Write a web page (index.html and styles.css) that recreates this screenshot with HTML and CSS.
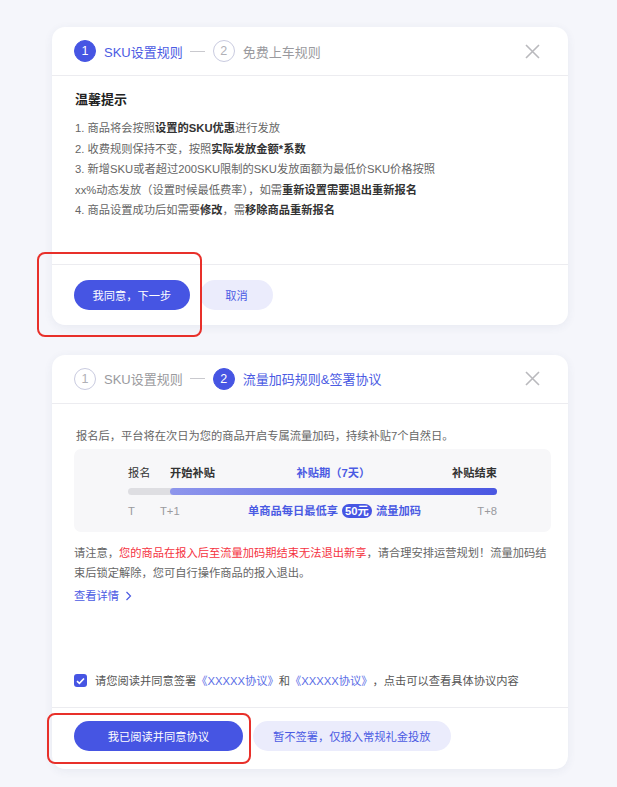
FILE: index.html
```html
<!DOCTYPE html>
<html lang="zh-CN">
<head>
  <meta charset="UTF-8">
  <title>流量加码报名</title>
  <link rel="stylesheet" href="styles.css">
</head>
<body>

  <!-- Step 1: SKU rules -->
  <div class="card">
    <div class="card-head">
      <div class="step active"><span class="num">1</span>SKU设置规则</div>
      <span class="dash"></span>
      <div class="step"><span class="num">2</span>免费上车规则</div>
      <svg class="close" width="15" height="15" viewBox="0 0 15 15"><path d="M1 1L14 14M14 1L1 14" stroke="#b9b9bd" stroke-width="1.6" fill="none"/></svg>
    </div>

    <div class="card-body tips">
      <h4>温馨提示</h4>
      <ol class="tip-list">
        <li>1. 商品将会按照<b>设置的SKU优惠</b>进行发放</li>
        <li>2. 收费规则保持不变，按照<b>实际发放金额*系数</b></li>
        <li>3. 新增SKU或者超过200SKU限制的SKU发放面额为最低价SKU价格按照xx%动态发放（设置时候最低费率），如需<b>重新设置需要退出重新报名</b></li>
        <li>4. 商品设置成功后如需要<b>修改</b>，需<b>移除商品重新报名</b></li>
      </ol>
    </div>

    <div class="card-foot first">
      <button class="btn primary small">我同意，下一步</button>
      <button class="btn light cancel">取消</button>
      <div class="mark mark-1"></div>
    </div>
  </div>

  <!-- Step 2: traffic boost + agreement -->
  <div class="card">
    <div class="card-head">
      <div class="step"><span class="num">1</span>SKU设置规则</div>
      <span class="dash"></span>
      <div class="step active"><span class="num">2</span>流量加码规则&amp;签署协议</div>
      <svg class="close" width="15" height="15" viewBox="0 0 15 15"><path d="M1 1L14 14M14 1L1 14" stroke="#b9b9bd" stroke-width="1.6" fill="none"/></svg>
    </div>

    <div class="card-body boost">
      <p class="intro">报名后，平台将在次日为您的商品开启专属流量加码，持续补贴7个自然日。</p>

      <div class="timeline">
        <div class="tl-top">
          <span class="tl-start">报名</span>
          <div class="tl-labels">
            <b>开始补贴</b>
            <span class="period">补贴期（7天）</span>
            <b>补贴结束</b>
          </div>
        </div>
        <div class="tl-bar"><div class="tl-fill"></div></div>
        <div class="tl-bottom">
          <span>T</span>
          <span>T+1</span>
          <span class="promo">单商品每日最低享 <em>50元</em> 流量加码</span>
          <span>T+8</span>
        </div>
      </div>

      <p class="note">请注意，<span class="warn">您的商品在报入后至流量加码期结束无法退出新享</span>，请合理安排运营规划！流量加码结束后锁定解除，您可自行操作商品的报入退出。</p>

      <a class="more" href="#">查看详情
        <svg width="7" height="10" viewBox="0 0 7 10"><path d="M1.5 1L5.5 5L1.5 9" stroke="#4b5be3" stroke-width="1.2" fill="none"/></svg>
      </a>

      <label class="agree">
        <span class="check">
          <svg width="9" height="8" viewBox="0 0 9 8"><path d="M1 4.2L3.4 6.4L8 1.5" stroke="#fff" stroke-width="1.6" fill="none"/></svg>
        </span>
        请您阅读并同意签署<a href="#">《XXXXX协议》</a>和<a href="#">《XXXXX协议》</a>，点击可以查看具体协议内容
      </label>
    </div>

    <div class="card-foot second">
      <button class="btn primary wide">我已阅读并同意协议</button>
      <button class="btn light">暂不签署，仅报入常规礼金投放</button>
      <div class="mark mark-2"></div>
    </div>
  </div>

</body>
</html>
```

FILE: styles.css
```css
body {
  margin: 0;
  padding: 27px 0 16px 3px;
  background: #f5f6fb;
  font-family: "Liberation Sans", "Noto Sans CJK SC", sans-serif;
  font-size: 11.25px;
  color: #666;
}

.card {
  width: 516px;
  margin: 0 auto 30px;
  background: #fff;
  border-radius: 13px;
  box-shadow: 0 2px 10px rgba(60, 70, 120, 0.07);
}

/* header with steps */
.card-head {
  height: 48px;
  display: flex;
  align-items: center;
  padding: 0 28px 0 22px;
  border-bottom: 1px solid #ececf0;
  font-size: 13px;
  color: #9a9a9e;
}

.step {
  display: flex;
  align-items: center;
  gap: 8px;
}

.step .num {
  width: 22px;
  height: 22px;
  box-sizing: border-box;
  border: 1px solid #c9cbe0;
  border-radius: 50%;
  display: flex;
  align-items: center;
  justify-content: center;
  font-size: 12.5px;
  color: #b0b0b6;
}

.step.active {
  color: #4b5be3;
}

.step.active .num {
  background: #4655e3;
  border-color: #4655e3;
  color: #fff;
}

.dash {
  width: 15px;
  height: 1px;
  background: #c9c9ce;
  margin: 0 8px 0 7px;
}

.close {
  margin-left: auto;
}

/* body */
.card-body {
  padding: 0 17px 0 22px;
}

.tips {
  padding-top: 14px;
  padding-bottom: 43px;
}

.tips h4 {
  margin: 0 0 8px 1px;
  font-size: 13px;
  line-height: 20px;
  color: #222;
}

.tip-list {
  list-style: none;
  margin: 0;
  padding: 0 0 0 1px;
  line-height: 20.6px;
  width: 380px;
}

.tip-list b {
  color: #333;
}

.boost {
  padding-top: 23px;
  padding-bottom: 17px;
}

.intro {
  margin: 0 0 4px 2px;
  line-height: 18px;
}

.timeline {
  background: #f7f7f9;
  border-radius: 7px;
  padding: 16px 54px 13px;
}

.tl-top {
  display: grid;
  grid-template-columns: 42px 1fr;
  line-height: 16px;
  color: #333;
}

.tl-labels {
  display: flex;
  justify-content: space-between;
}

.tl-labels b {
  font-weight: bold;
}

.period {
  color: #4b5be3;
  font-weight: bold;
}

.tl-bar {
  margin-top: 7px;
  height: 7px;
  background: #dedee2;
  border-radius: 4px;
  display: flex;
}

.tl-fill {
  margin-left: 42px;
  flex: 1;
  border-radius: 4px;
  background: linear-gradient(90deg, #8e96ec, #4a57e2);
}

.tl-bottom {
  margin-top: 8px;
  display: grid;
  grid-template-columns: 32px auto 1fr auto;
  align-items: center;
  line-height: 16px;
  color: #9a9a9e;
}

.promo {
  justify-self: center;
  padding-left: 12px;
  color: #4b5be3;
  font-weight: bold;
}

.promo em {
  font-style: normal;
  display: inline-block;
  background: #4655e3;
  color: #fff;
  border-radius: 7px;
  padding: 0 3px;
  line-height: 14px;
  margin: 0 1px;
}

.note {
  margin: 11px 0 0;
  line-height: 20px;
}

.warn {
  color: #f5333f;
}

.more {
  display: inline-flex;
  align-items: center;
  gap: 6px;
  margin-top: 4px;
  line-height: 18px;
  color: #4b5be3;
  text-decoration: none;
}

.agree {
  display: flex;
  align-items: center;
  margin-top: 67px;
  line-height: 18px;
  color: #555;
}

.agree a {
  color: #5a6de6;
  text-decoration: none;
}

.check {
  width: 13px;
  height: 13px;
  border-radius: 3px;
  background: #4655e3;
  display: flex;
  align-items: center;
  justify-content: center;
  margin-right: 8px;
}

/* footer buttons */
.card-foot {
  position: relative;
  display: flex;
  gap: 10px;
  border-top: 1px solid #ececf0;
  padding: 15px 22px 15px;
}

.card-foot.second {
  padding: 13px 22px 18px;
}

.btn {
  height: 30px;
  border: none;
  border-radius: 15px;
  font-family: inherit;
  font-size: 11.25px;
  cursor: pointer;
}

.btn.primary {
  background: #4655e3;
  color: #fff;
}

.btn.small {
  width: 116px;
}

.btn.wide {
  width: 169px;
}

.btn.light {
  background: #ebecfc;
  color: #4b5be3;
  padding: 0 20px;
}

.btn.cancel {
  width: 73px;
  padding: 0;
}

/* red annotation boxes */
.mark {
  position: absolute;
  border: 2px solid #e8302a;
  border-radius: 8px;
}

.mark-1 {
  left: -15px;
  top: -13px;
  width: 161px;
  height: 81px;
}

.mark-2 {
  left: -5px;
  top: 5px;
  width: 200px;
  height: 47px;
}
```
